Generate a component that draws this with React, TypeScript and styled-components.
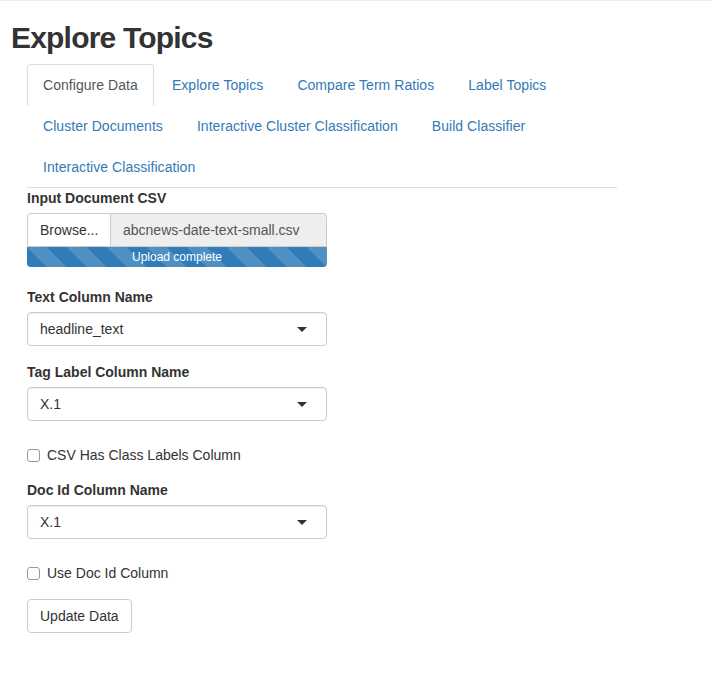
import React from "react";
import styled, { createGlobalStyle } from "styled-components";

const GlobalStyle = createGlobalStyle`
  html, body { margin: 0; padding: 0; background: #fff; }
  body {
    font-family: "Liberation Sans", Arial, Helvetica, sans-serif;
    font-size: 14px;
    line-height: 20px;
    color: #333;
    border-top: 1px solid #eee;
  }
  * { box-sizing: border-box; }
`;

const Page = styled.div`
  padding-left: 11px;
`;

const Title = styled.h2`
  margin: 20px 0 10px;
  font-size: 30px;
  line-height: 33px;
  font-weight: 700;
  letter-spacing: -0.8px;
  color: #333;
`;

const Main = styled.div`
  margin-left: 16px;
  width: 590px;
`;

const TabList = styled.ul`
  display: flex;
  flex-wrap: wrap;
  list-style: none;
  margin: 0;
  padding: 0;
  border-bottom: 1px solid #ddd;
`;

const TabItem = styled.li`
  margin: 0 2px -1px 0;
`;

const TabLink = styled.a<{ $active?: boolean }>`
  display: block;
  padding: 10px 15px;
  line-height: 20px;
  letter-spacing: 0.05px;
  border: 1px solid transparent;
  border-radius: 4px 4px 0 0;
  text-decoration: none;
  color: ${(p) => (p.$active ? "#555" : "#337ab7")};
  background: ${(p) => (p.$active ? "#fff" : "transparent")};
  border-color: ${(p) => (p.$active ? "#ddd #ddd transparent" : "transparent")};
  cursor: pointer;
`;

const Content = styled.div`
  width: 300px;
`;

const FormGroup = styled.div<{ $mb: number }>`
  margin-bottom: ${(p) => p.$mb}px;
`;

const Label = styled.label`
  display: block;
  font-weight: 700;
  line-height: 20px;
  margin-bottom: 5px;
`;

const InputGroup = styled.div`
  display: flex;
  height: 34px;
`;

const BrowseButton = styled.span`
  display: block;
  width: 84px;
  padding: 6px 12px;
  border: 1px solid #ccc;
  border-radius: 4px 0 0 0;
  background: #fff;
  color: #333;
  white-space: nowrap;
`;

const FileName = styled.span`
  display: block;
  flex: 1;
  padding: 6px 12px;
  border: 1px solid #ccc;
  border-left: none;
  border-radius: 0 4px 0 0;
  background: #eee;
  color: #555;
  white-space: nowrap;
  overflow: hidden;
`;

const Progress = styled.div`
  height: 20px;
  border-radius: 0 0 4px 4px;
  background-color: #2f7cb8;
  background-image: linear-gradient(
    45deg,
    rgba(255, 255, 255, 0.15) 25%,
    transparent 25%,
    transparent 50%,
    rgba(255, 255, 255, 0.15) 50%,
    rgba(255, 255, 255, 0.15) 75%,
    transparent 75%,
    transparent
  );
  background-size: 40px 40px;
  color: #fff;
  font-size: 12px;
  line-height: 20px;
  text-align: center;
`;

const Select = styled.div`
  display: flex;
  align-items: center;
  justify-content: space-between;
  height: 34px;
  padding: 6px 12px;
  border: 1px solid #ccc;
  border-radius: 4px;
  background: #fff;
  box-shadow: inset 0 1px 1px rgba(0, 0, 0, 0.075);
  color: #333;
`;

const Caret = styled.span`
  width: 0;
  height: 0;
  border-left: 5px solid transparent;
  border-right: 5px solid transparent;
  border-top: 5px solid #333;
  margin-right: 7px;
`;

const CheckRow = styled.label<{ $mb: number }>`
  display: flex;
  align-items: center;
  gap: 7px;
  height: 20px;
  line-height: 20px;
  margin-bottom: ${(p) => p.$mb}px;
  cursor: pointer;
`;

const CheckBox = styled.input`
  appearance: none;
  -webkit-appearance: none;
  width: 13px;
  height: 13px;
  margin: 0;
  border: 1px solid #999;
  border-radius: 3px;
  background: #fff;
`;

const Button = styled.button`
  height: 34px;
  padding: 6px 12px;
  border: 1px solid #ccc;
  border-radius: 4px;
  background: #fff;
  color: #333;
  font-family: inherit;
  font-size: 14px;
  line-height: 20px;
`;

const tabs = [
  "Configure Data",
  "Explore Topics",
  "Compare Term Ratios",
  "Label Topics",
  "Cluster Documents",
  "Interactive Cluster Classification",
  "Build Classifier",
  "Interactive Classification",
];

export default function App() {
  return (
    <>
      <GlobalStyle />
      <Page>
        <Title>Explore Topics</Title>
        <Main>
          <TabList>
            {tabs.map((t, i) => (
              <TabItem key={t}>
                <TabLink $active={i === 0}>{t}</TabLink>
              </TabItem>
            ))}
          </TabList>
          <Content>
            <FormGroup $mb={20}>
              <Label>Input Document CSV</Label>
              <InputGroup>
                <BrowseButton>Browse...</BrowseButton>
                <FileName>abcnews-date-text-small.csv</FileName>
              </InputGroup>
              <Progress>Upload complete</Progress>
            </FormGroup>
            <FormGroup $mb={16}>
              <Label>Text Column Name</Label>
              <Select>
                <span>headline_text</span>
                <Caret />
              </Select>
            </FormGroup>
            <FormGroup $mb={24}>
              <Label>Tag Label Column Name</Label>
              <Select>
                <span>X.1</span>
                <Caret />
              </Select>
            </FormGroup>
            <CheckRow $mb={15}>
              <CheckBox type="checkbox" />
              <span>CSV Has Class Labels Column</span>
            </CheckRow>
            <FormGroup $mb={24}>
              <Label>Doc Id Column Name</Label>
              <Select>
                <span>X.1</span>
                <Caret />
              </Select>
            </FormGroup>
            <CheckRow $mb={16}>
              <CheckBox type="checkbox" />
              <span>Use Doc Id Column</span>
            </CheckRow>
            <Button>Update Data</Button>
          </Content>
        </Main>
      </Page>
    </>
  );
}
